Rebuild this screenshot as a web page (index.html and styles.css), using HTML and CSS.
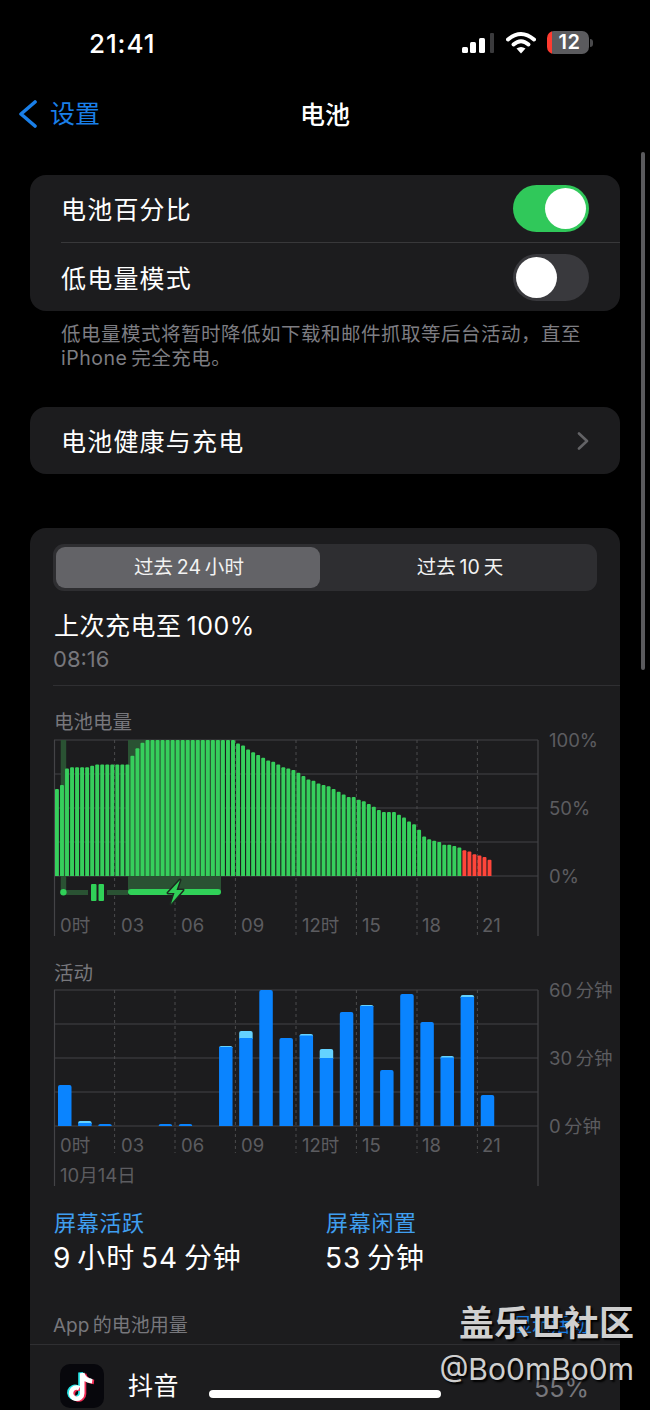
FILE: index.html
```html
<!DOCTYPE html>
<html lang="zh-CN">
<head>
<meta charset="utf-8">
<title>电池</title>
<link rel="stylesheet" href="styles.css">
</head>
<body>
<div class="screen">
  <header class="status">
    <div class="time">21:41</div>
    <div class="status-icons">
      <svg class="signal" width="32" height="20" viewBox="0 0 32 20">
        <rect x="0" y="14" width="6" height="6" rx="1.5" fill="#fff"/>
        <rect x="8" y="9" width="6" height="11" rx="1.5" fill="#fff"/>
        <rect x="17" y="5" width="6" height="15" rx="1.5" fill="#fff"/>
        <rect x="28" y="0" width="4" height="20" rx="1" fill="#3a3a3c"/>
      </svg>
      <svg class="wifi" width="30" height="23" viewBox="0 0 30 23">
        <path d="M2 8.5Q15 -2.5 28 8.5" fill="none" stroke="#fff" stroke-width="4" stroke-linecap="round"/>
        <path d="M7.5 13.5Q15 7 22.5 13.5" fill="none" stroke="#fff" stroke-width="4" stroke-linecap="round"/>
        <path d="M10.5 17.5Q15 14.5 19.5 17.5L15 22.5Z" fill="#fff"/>
      </svg>
      <div class="battery">12</div>
    </div>
  </header>
  <nav class="nav">
    <div class="back">
      <svg width="18" height="28" viewBox="0 0 18 28"><path d="M16 2L2 14L16 26" fill="none" stroke="#1a7fe8" stroke-width="3.6" stroke-linecap="round" stroke-linejoin="round"/></svg>
      <span>设置</span>
    </div>
    <div class="nav-title">电池</div>
  </nav>

  <main class="content">
    <section class="card">
      <div class="row">
        <span class="row-label">电池百分比</span>
        <span class="toggle on"><span class="knob"></span></span>
      </div>
      <div class="row-divider"></div>
      <div class="row row-tall">
        <span class="row-label">低电量模式</span>
        <span class="toggle"><span class="knob"></span></span>
      </div>
    </section>
    <p class="note">低电量模式将暂时降低如下载和邮件抓取等后台活动，直至<br>iPhone&#8201;完全充电。</p>

    <section class="card card-health">
      <div class="row">
        <span class="row-label">电池健康与充电</span>
        <svg class="chev" width="12" height="18" viewBox="0 0 12 18"><path d="M2 1.5L10 9L2 16.5" fill="none" stroke="#636366" stroke-width="2.6" stroke-linecap="round" stroke-linejoin="round"/></svg>
      </div>
    </section>

    <section class="card card-usage">
      <div class="segment">
        <div class="seg-item selected">过去&#8201;24&#8201;小时</div>
        <div class="seg-item">过去&#8201;10&#8201;天</div>
      </div>
      <div class="charged">上次充电至&#8201;100%</div>
      <div class="charged-time">08:16</div>
      <div class="usage-divider"></div>

      <div class="chart-title first">电池电量</div>
      <svg id="levelChart" class="chart" width="570" height="212" viewBox="53 728 570 212"></svg>

      <div class="chart-title second">活动</div>
      <svg id="activityChart" class="chart" width="570" height="211" viewBox="53 979 570 211"></svg>

      <div class="stats">
        <div class="stat">
          <div class="stat-label">屏幕活跃</div>
          <div class="stat-value">9&#8201;小时&#8201;54&#8201;分钟</div>
        </div>
        <div class="stat">
          <div class="stat-label">屏幕闲置</div>
          <div class="stat-value">53&#8201;分钟</div>
        </div>
      </div>

      <div class="app-head">
        <span>App&#8201;的电池用量</span>
        <span class="app-link">显示活动</span>
      </div>
      <div class="app-row">
        <svg class="app-icon" width="44" height="44" viewBox="0 0 44 44">
          <rect width="44" height="44" rx="10" fill="#07070c"/>
          <g fill="none" stroke-width="4.6">
            <path d="M20.5 28.5a5.6 5.6 0 1 1-3-5M20.5 28.5V8.5Q22 15.5 30.5 16.5" stroke="#25e4e6"/>
            <path d="M24 30a5.6 5.6 0 1 1-3-5M24 30V10Q25.5 17 34 18" stroke="#f02c55"/>
            <path d="M22.2 29.2a5.6 5.6 0 1 1-3-5M22.2 29.2V9.2Q23.7 16.2 32.2 17.2" stroke="#fff"/>
          </g>
        </svg>
        <span class="app-name">抖音</span>
        <span class="app-pct">55%</span>
      </div>
    </section>
  </main>

  <div class="scrollbar"></div>
  <div class="home-bar"></div>
  <div class="watermark">
    <div class="wm-top">盖乐世社区</div>
    <div class="wm-bottom">@Bo0mBo0m</div>
  </div>
</div>
<script src="script.js"></script>
</body>
</html>
```
FILE: styles.css
```css
* { box-sizing: border-box; }
html, body { margin: 0; padding: 0; background: #000; }
body {
  font-family: "Inter", "Noto Sans CJK SC", sans-serif;
  color: #fff;
}
.screen {
  position: relative;
  width: 650px;
  height: 1410px;
  overflow: hidden;
  background: #000;
}

/* status bar */
.status {
  height: 88px;
  display: flex;
  align-items: center;
  justify-content: space-between;
  padding: 0 61px 0 89px;
}
.time {
  font-size: 26px;
  font-weight: 500;
  letter-spacing: 0.9px;
  line-height: 30px;
}
.status-icons {
  display: flex;
  align-items: flex-start;
  height: 24px;
}
.signal { margin-top: 1px; margin-right: 12px; }
.wifi { margin-top: -1px; margin-right: 11px; }
.battery {
  position: relative;
  width: 42px;
  height: 23px;
  margin-top: -1px;
  border-radius: 7px;
  background: linear-gradient(90deg, #ff3b30 0 5px, #5b5b5e 5px);
  font-size: 20px;
  font-weight: 600;
  letter-spacing: 0.5px;
  line-height: 23px;
  text-align: center;
  padding-left: 3px;
}
.battery::after {
  content: "";
  position: absolute;
  right: -4px;
  top: 8px;
  width: 3px;
  height: 8px;
  border-radius: 0 3px 3px 0;
  background: #4a4a4c;
}

/* nav */
.nav {
  position: relative;
  height: 52px;
  display: flex;
  align-items: center;
  justify-content: center;
}
.back {
  position: absolute;
  left: 19px;
  top: 12px;
  display: flex;
  align-items: center;
  gap: 13px;
  color: #1a7fe8;
  font-size: 25px;
  line-height: 28px;
}
.nav-title {
  font-size: 25px;
  font-weight: 500;
  line-height: 32px;
  padding-top: 1px;
}

/* content */
.content {
  padding: 35px 30px 0;
}
.card {
  background: #1c1c1e;
  border-radius: 16px;
}
.row {
  height: 67px;
  display: flex;
  align-items: center;
  justify-content: space-between;
  padding: 0 31px 0 31px;
}
.row-tall { height: 68px; }
.row-label {
  font-size: 25px;
  letter-spacing: 1.2px;
  line-height: 34px;
  padding-top: 3px;
}
.row-divider {
  height: 1px;
  margin-left: 31px;
  background: #38383a;
}
.toggle {
  position: relative;
  display: block;
  width: 76px;
  height: 47px;
  border-radius: 24px;
  background: #39393d;
}
.toggle.on { background: #30c85a; }
.knob {
  position: absolute;
  left: 3px;
  top: 3px;
  width: 41px;
  height: 41px;
  border-radius: 50%;
  background: #fff;
}
.toggle.on .knob { left: 32px; }

.note {
  margin: 11px 0 0 31px;
  font-size: 19.5px;
  letter-spacing: 0.5px;
  line-height: 24px;
  color: #7d7d82;
  white-space: nowrap;
}
.card-health { margin-top: 37px; }
.chev { display: block; }

.card-usage {
  margin-top: 54px;
  padding-top: 16px;
  height: 900px;
}
.segment {
  display: flex;
  margin-left: 23px;
  width: 544px;
  height: 47px;
  padding: 3px;
  border-radius: 11px;
  background: #2e2e31;
}
.seg-item {
  flex: 1;
  padding-left: 6px;
  text-align: center;
  font-size: 19.5px;
  letter-spacing: 0.1px;
  line-height: 41px;
  color: #f2f2f2;
  border-radius: 9px;
}
.seg-item.selected {
  flex: 0 0 264px;
  padding-left: 2px;
  background: #636367;
}
.charged {
  margin: 17px 0 0 24px;
  font-size: 25px;
  letter-spacing: 0.5px;
  line-height: 36px;
}
.charged-time {
  margin-left: 23px;
  font-size: 22px;
  line-height: 30px;
  color: #77777c;
}
.usage-divider {
  height: 1px;
  margin: 11px 0 0 23px;
  background: #2f2f32;
}
.chart-title {
  margin-left: 24px;
  font-size: 19.5px;
  line-height: 24px;
  color: #77777c;
}
.chart-title.first { margin-top: 24px; margin-bottom: -6px; }
.chart-title.second { margin-top: 21px; margin-bottom: -6px; }
.chart {
  display: block;
  margin-left: 23px;
}
.chart text {
  font-family: "Inter", "Noto Sans CJK SC", sans-serif;
  font-size: 18.5px;
  fill: #5c5c60;
}

.stats {
  display: flex;
  margin: 19px 0 0 24px;
}
.stat { width: 272px; }
.stat-label {
  font-size: 22px;
  letter-spacing: 0.7px;
  line-height: 28px;
  color: #3f9eef;
}
.stat-value {
  margin-top: 3px;
  margin-left: -1px;
  font-size: 28px;
  letter-spacing: 0.9px;
  line-height: 36px;
}
.app-head {
  display: flex;
  justify-content: space-between;
  margin: 38px 31px 0 23px;
  font-size: 19px;
  line-height: 24px;
  color: #77777c;
}
.app-link { color: #1a7fe8; }
.app-row {
  display: flex;
  align-items: center;
  margin-top: 6px;
  border-top: 1px solid #2f2f32;
  padding: 17px 31px 0 30px;
}
.app-icon { display: block; flex: none; }
.app-name {
  margin-left: 24px;
  font-size: 25px;
  letter-spacing: 0.4px;
  line-height: 44px;
}
.app-pct {
  margin-left: auto;
  padding-top: 4px;
  font-size: 25px;
  line-height: 44px;
  color: #77777c;
}

/* overlays */
.scrollbar {
  position: absolute;
  left: 641px;
  top: 152px;
  width: 4px;
  height: 518px;
  border-radius: 2px;
  background: #5a5a5d;
}
.home-bar {
  position: absolute;
  left: 209px;
  top: 1390px;
  width: 232px;
  height: 8px;
  border-radius: 4px;
  background: #fff;
}
.watermark {
  position: absolute;
  right: 16px;
  top: 1300px;
  text-align: right;
  color: #cfcfcf;
  text-shadow: 2px 2px 2px #000;
}
.wm-top {
  font-size: 35px;
  font-weight: 700;
  line-height: 46px;
}
.wm-bottom {
  font-size: 30px;
  line-height: 46px;
}
```
FILE: script.js
```js
var NS = "http://www.w3.org/2000/svg";
function el(parent, name, attrs, text) {
  var n = document.createElementNS(NS, name);
  for (var k in attrs) n.setAttribute(k, attrs[k]);
  if (text) n.textContent = text;
  parent.appendChild(n);
  return n;
}
function topRound(x, w, top, base, r) {
  r = Math.min(r, base - top);
  return "M" + x + " " + base + "V" + (top + r) + "Q" + x + " " + top + " " + (x + r) + " " + top +
    "H" + (x + w - r) + "Q" + (x + w) + " " + top + " " + (x + w) + " " + (top + r) + "V" + base + "Z";
}
function frame(svg, top, bottom, dashEnd) {
  var grid = "#434346";
  for (var i = 0; i < 5; i++) {
    var y = top + i * 34;
    el(svg, "line", { x1: 54, x2: 538, y1: y, y2: y, stroke: grid, "stroke-width": 1.2 });
  }
  el(svg, "line", { x1: 54.5, x2: 54.5, y1: top, y2: bottom, stroke: grid, "stroke-width": 1.2 });
  el(svg, "line", { x1: 538, x2: 538, y1: top, y2: bottom, stroke: grid, "stroke-width": 1.2 });
  [114.6, 175, 235.4, 296, 356.4, 417, 477.4].forEach(function (x) {
    el(svg, "line", { x1: x, x2: x, y1: top, y2: dashEnd, stroke: "#4a4a4d", "stroke-dasharray": "3 3", "stroke-width": 1 });
  });
}
function xLabels(svg, y) {
  [["0时", 60], ["03", 121], ["06", 181], ["09", 241], ["12时", 302], ["15", 362], ["18", 422], ["21", 482]].forEach(function (l) {
    el(svg, "text", { x: l[1], y: y }, l[0]);
  });
}

/* battery level */
var level = [64, 67, 79, 80, 80, 80, 80, 81, 82, 82, 82, 82, 82, 82, 82, 88.5, 94, 98];
for (var i = 18; i <= 35; i++) level.push(100);
level = level.concat([97.5, 96, 93, 91, 89, 87, 85, 84, 82, 80, 79, 78, 76,
  73.5, 71, 70, 68, 67, 66, 64, 62, 60, 58, 58, 56, 55, 53, 51, 48.5, 47, 47, 47, 45, 43, 40, 38, 34, 29, 27, 26, 25, 23, 23, 22, 21,
  19, 18, 16, 15, 14, 12]);

var a = document.getElementById("levelChart");
frame(a, 740, 936, 936);
el(a, "rect", { x: 60.7, y: 740, width: 5.5, height: 152, fill: "#2a5233" });
el(a, "rect", { x: 128, y: 740, width: 93, height: 153, fill: "#2a5233" });
level.forEach(function (v, i) {
  var x = 55 + i * 5.03, top = 876 - 136 * v / 100;
  el(a, "path", { d: topRound(x, 3.9, top, 876, 1), fill: i >= 81 ? "#ff453a" : "#36cf5c" });
});
el(a, "rect", { x: 66, y: 890, width: 22, height: 5, fill: "#2a5233" });
el(a, "rect", { x: 107, y: 890, width: 21, height: 5, fill: "#2a5233" });
el(a, "circle", { cx: 63.4, cy: 892.3, r: 3.2, fill: "#30d158" });
el(a, "rect", { x: 91, y: 884, width: 5.5, height: 17, rx: 1, fill: "#30d158" });
el(a, "rect", { x: 98.5, y: 884, width: 5.5, height: 17, rx: 1, fill: "#30d158" });
el(a, "rect", { x: 128, y: 889, width: 93, height: 6, rx: 3, fill: "#30d158" });
el(a, "path", { d: "M180 880L168 893H174.5L171 904L183 890H176.5Z", fill: "#30d158", stroke: "#1c2a20", "stroke-width": 3, "paint-order": "stroke", "stroke-linejoin": "round" });
xLabels(a, 932);
el(a, "text", { x: 549, y: 747 }, "100%");
el(a, "text", { x: 549, y: 815 }, "50%");
el(a, "text", { x: 549, y: 883 }, "0%");

/* activity: [hour, total height, light cap] */
var act = [[0, 41, 0], [1, 5, 2], [2, 2, 0], [5, 2, 0], [6, 2, 0], [8, 80, 1], [9, 95, 7], [10, 136, 0],
  [11, 88, 0], [12, 92, 1.5], [13, 77, 9], [14, 114, 0], [15, 121, 1], [16, 56, 0], [17, 132, 0],
  [18, 104, 0], [19, 70, 1.5], [20, 131, 2], [21, 31, 0]];
var b = document.getElementById("activityChart");
frame(b, 990, 1186, 1153);
act.forEach(function (d) {
  var x = 58 + d[0] * 20.13, top = 1126 - d[1];
  if (d[2]) el(b, "path", { d: topRound(x, 13.5, top, top + d[2] + 1, 2), fill: "#64d2ff" });
  el(b, "path", { d: d[2] ? "M" + x + " 1126V" + (top + d[2]) + "H" + (x + 13.5) + "V1126Z" : topRound(x, 13.5, top, 1126, 2), fill: "#0a84ff" });
});
xLabels(b, 1152);
el(b, "text", { x: 60, y: 1182 }, "10月14日");
el(b, "text", { x: 549, y: 997 }, "60\u2009分钟");
el(b, "text", { x: 549, y: 1065 }, "30\u2009分钟");
el(b, "text", { x: 549, y: 1133 }, "0\u2009分钟");
```
